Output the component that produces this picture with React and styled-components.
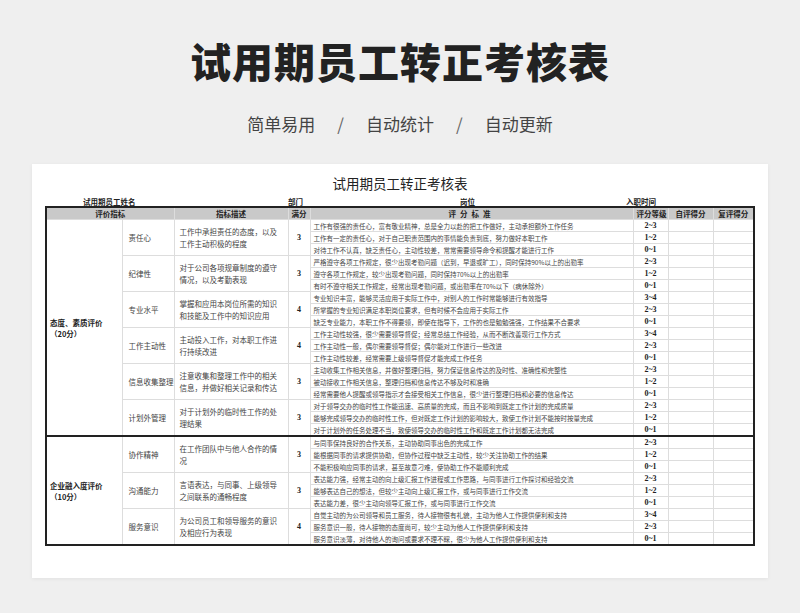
import React from "react";
import styled, { createGlobalStyle } from "styled-components";

const Global = createGlobalStyle`
  html, body { margin: 0; padding: 0; background: #efefef; }
  body { font-family: "Noto Sans CJK SC", "Noto Sans", sans-serif; }
`;

const Page = styled.div`
  width: 800px; height: 613px; overflow: hidden;
  display: flex; flex-direction: column; align-items: center;
`;
const Title = styled.h1`
  margin: 36px 0 0; font-size: 41px; font-weight: 900; color: #222; letter-spacing: 1px; line-height: 48px;
`;
const Sub = styled.div`
  margin-top: 28px; font-size: 17px; color: #444; display: flex; gap: 22px; line-height: 24px;
`;
const Slash = styled.span` color: #666; `;
const Card = styled.div`
  margin-top: 28px; width: 736px; height: 414px; background: #fff;
  box-shadow: 0 1px 4px rgba(0,0,0,0.06); display: flex; flex-direction: column; align-items: center;
`;
const SheetTitle = styled.div`
  margin-top: 11px; font-size: 13.5px; color: #222; line-height: 16px;
`;
const InfoRow = styled.div`
  width: 708px; display: grid; grid-template-columns: 242px 172px 166px 128px;
  font-size: 7.5px; font-weight: 700; color: #222; margin-top: 6px; line-height: 9px;
`;
const Info = styled.span` padding-left: ${p => p.$pad}px; `;
const Table = styled.table`
  width: 708px; table-layout: fixed; border-collapse: collapse; border: 2px solid #222;
  font-size: 7px; color: #333;
  td, th { border: 1px solid #ddd; padding: 0 3px; height: 11px; line-height: 10px; white-space: nowrap; overflow: hidden; }
`;
const Th = styled.th`
  background: #c9c9c9; font-weight: 700; color: #222; font-size: 7.5px; text-align: center;
  letter-spacing: ${p => p.$ls || 0}px;
`;
const sepBorder = p => (p.$sep ? "2px solid #222" : "1px solid #ddd");
const Cat = styled.td`
  font-weight: 700; color: #222; font-size: 7.5px; vertical-align: middle; white-space: normal !important;
  line-height: 11px !important; border-top: ${sepBorder} !important;
`;
const Item = styled.td`
  font-size: 7.5px; color: #444; padding-left: 6px !important; border-top: ${sepBorder} !important;
`;
const Desc = styled.td`
  white-space: normal !important; font-size: 7.5px; color: #444; line-height: 12px !important; padding: 0 5px !important;
  border-top: ${sepBorder} !important;
`;
const Score = styled.td`
  text-align: center; font-weight: 700; color: #222; font-family: "Liberation Serif", serif;
  font-size: 8px; border-top: ${sepBorder} !important;
`;
const Crit = styled.td`
  font-size: 6.5px; color: #444; border-top: ${sepBorder} !important;
`;
const Grade = styled.td`
  text-align: center; font-weight: 700; color: #222; font-size: 8px; font-family: "Liberation Serif", serif;
  border-top: ${sepBorder} !important;
`;
const Blank = styled.td` border-top: ${sepBorder} !important; `;

const groups = [
  { name: "态度、素质评价\n（20分）", items: [
    ["责任心", "工作中承担责任的态度，以及工作主动积极的程度", 3, [
      ["工作有很强的责任心，富有敬业精神，总是全力以赴的把工作做好，主动承担额外工作任务", "2~3"],
      ["工作有一定的责任心，对于自己职责范围内的事情能负责到底，努力做好本职工作", "1~2"],
      ["对待工作不认真，缺乏责任心，主动性较差，常常需要领导命令和提醒才能进行工作", "0~1"]]],
    ["纪律性", "对于公司各项规章制度的遵守情况，以及考勤表现", 3, [
      ["严格遵守各项工作规定，很少出现考勤问题（迟到，早退或旷工），同时保持90%以上的出勤率", "2~3"],
      ["遵守各项工作规定，较少出现考勤问题，同时保持70%以上的出勤率", "1~2"],
      ["有时不遵守相关工作规定，经常出现考勤问题，或出勤率在70%以下（病休除外）", "0~1"]]],
    ["专业水平", "掌握和应用本岗位所需的知识和技能及工作中的知识应用", 4, [
      ["专业知识丰富，能够灵活应用于实际工作中，对别人的工作时常能够进行有效指导", "3~4"],
      ["所掌握的专业知识满足本职岗位要求，但有时候不会应用于实际工作", "2~3"],
      ["缺乏专业能力，本职工作不得要领，即使在指导下，工作的也是勉勉强强，工作结果不合要求", "0~1"]]],
    ["工作主动性", "主动投入工作，对本职工作进行持续改进", 4, [
      ["工作主动性较强，很少需要领导督促；经常总结工作经验，从而不断改善现行工作方式", "3~4"],
      ["工作主动性一般，偶尔需要领导督促；偶尔能对工作进行一些改进", "2~3"],
      ["工作主动性较差，经常需要上级领导督促才能完成工作任务", "0~1"]]],
    ["信息收集整理", "注意收集和整理工作中的相关信息，并做好相关记录和传达", 3, [
      ["主动收集工作相关信息，并做好整理归档，努力保证信息传达的及时性、准确性和完整性", "2~3"],
      ["被动接收工作相关信息，整理归档和信息传达不够及时和准确", "1~2"],
      ["经常需要他人提醒或领导指示才会接受相关工作信息，很少进行整理归档和必要的信息传达", "0~1"]]],
    ["计划外管理", "对于计划外的临时性工作的处理结果", 3, [
      ["对于领导交办的临时性工作能迅速、高质量的完成，而且不影响到既定工作计划的完成质量", "2~3"],
      ["能够完成领导交办的临时性工作，但对既定工作计划的影响较大，致使工作计划不能按时按量完成", "1~2"],
      ["对于计划外的任务处理不当，致使领导交办的临时性工作和既定工作计划都无法完成", "0~1"]]],
  ]},
  { name: "企业融入度评价\n（10分）", items: [
    ["协作精神", "在工作团队中与他人合作的情况", 3, [
      ["与同事保持良好的合作关系，主动协助同事出色的完成工作", "2~3"],
      ["能根据同事的请求提供协助，但协作过程中缺乏主动性，较少关注协助工作的结果", "1~2"],
      ["不能积极响应同事的请求，甚至故意刁难，使协助工作不能顺利完成", "0~1"]]],
    ["沟通能力", "言语表达，与同事、上级领导之间联系的通畅程度", 3, [
      ["表达能力强，经常主动的向上级汇报工作进程或工作思路，与同事进行工作探讨和经验交流", "2~3"],
      ["能够表达自己的想法，但较少主动向上级汇报工作，或与同事进行工作交流", "1~2"],
      ["表达能力差，很少主动向领导汇报工作，或与同事进行工作交流", "0~1"]]],
    ["服务意识", "为公司员工和领导服务的意识及相应行为表现", 4, [
      ["自觉主动的为公司领导和员工服务，待人接物很有礼貌，主动为他人工作提供便利和支持", "3~4"],
      ["服务意识一般，待人接物的态度尚可，较少主动为他人工作提供便利和支持", "2~3"],
      ["服务意识淡薄，对待他人的询问或要求不理不睬，很少为他人工作提供便利和支持", "0~1"]]],
  ]},
];

export default function App() {
  return (
    <Page>
      <Global />
      <Title>试用期员工转正考核表</Title>
      <Sub><span>简单易用</span><Slash>/</Slash><span>自动统计</span><Slash>/</Slash><span>自动更新</span></Sub>
      <Card>
        <SheetTitle>试用期员工转正考核表</SheetTitle>
        <InfoRow>
          <Info $pad={37}>试用期员工姓名</Info>
          <Info $pad={0}>部门</Info>
          <Info $pad={0}>岗位</Info>
          <Info $pad={0}>入职时间</Info>
        </InfoRow>
        <Table>
          <colgroup>
            <col style={{ width: 76 }} /><col style={{ width: 52 }} /><col style={{ width: 114 }} />
            <col style={{ width: 22 }} /><col style={{ width: 323 }} /><col style={{ width: 35 }} />
            <col style={{ width: 45 }} /><col style={{ width: 41 }} />
          </colgroup>
          <thead>
            <tr>
              <Th colSpan={2}>评价指标</Th><Th>指标描述</Th><Th>满分</Th>
              <Th $ls={4}>评分标准</Th><Th>评分等级</Th><Th>自评得分</Th><Th>复评得分</Th>
            </tr>
          </thead>
          <tbody>
            {groups.map((g, gi) =>
              g.items.map((it, ii) =>
                it[3].map((c, ci) => {
                  const sep = gi > 0 && ii === 0 && ci === 0;
                  return (
                    <tr key={`${gi}-${ii}-${ci}`}>
                      {ii === 0 && ci === 0 && (
                        <Cat $sep={sep} rowSpan={g.items.length * 3}>
                          {g.name.split("\n").map((l, k) => <div key={k}>{l}</div>)}
                        </Cat>
                      )}
                      {ci === 0 && <Item $sep={sep} rowSpan={3}>{it[0]}</Item>}
                      {ci === 0 && <Desc $sep={sep} rowSpan={3}>{it[1]}</Desc>}
                      {ci === 0 && <Score $sep={sep} rowSpan={3}>{it[2]}</Score>}
                      <Crit $sep={sep}>{c[0]}</Crit>
                      <Grade $sep={sep}>{c[1]}</Grade>
                      <Blank $sep={sep} /><Blank $sep={sep} />
                    </tr>
                  );
                })
              )
            )}
          </tbody>
        </Table>
      </Card>
    </Page>
  );
}
